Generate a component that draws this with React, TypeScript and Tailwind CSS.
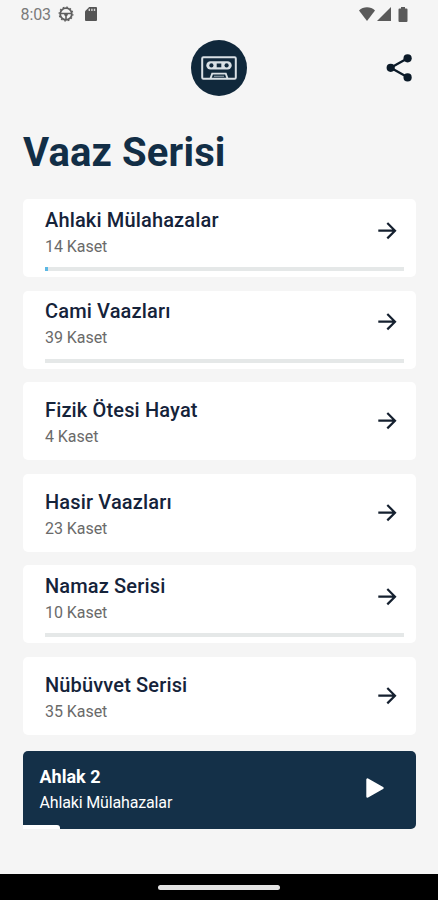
interface Series {
  title: string;
  count: number;
  progress?: number;
}

const series: Series[] = [
  { title: 'Ahlaki Mülahazalar', count: 14, progress: 1 },
  { title: 'Cami Vaazları', count: 39, progress: 0 },
  { title: 'Fizik Ötesi Hayat', count: 4 },
  { title: 'Hasir Vaazları', count: 23 },
  { title: 'Namaz Serisi', count: 10, progress: 0 },
  { title: 'Nübüvvet Serisi', count: 35 },
];

function StatusBar() {
  return (
    <div className="flex h-7 items-center pl-[20.5px] pr-[30px] text-[#7a7a7a]">
      <span className="w-[30px] pt-px text-[16px] leading-7 tracking-[-0.1px]">8:03</span>
      <svg className="ml-[7px] h-4 w-4" viewBox="0 0 16 16" fill="none" stroke="#5f5f5f">
        <circle cx="8" cy="8" r="5.8" strokeWidth="1.8" />
        <circle cx="8" cy="8" r="6.900" strokeWidth="1.1" strokeDasharray="1.8 1.81" />
        <path d="M2.500 7.500h11M8 8v5.500" strokeWidth="1.600" />
        <path d="M5.800 7.500h4.400L9.200 10H6.800z" fill="#5f5f5f" stroke="none" />
      </svg>
      <svg className="ml-[11px] h-[14px] w-3" viewBox="0 0 12 14">
        <path d="M4.200 0H11a1 1 0 0 1 1 1v12a1 1 0 0 1-1 1H1a1 1 0 0 1-1-1V4.200z" fill="#555" />
        <path d="M4.300 1.700v2.400M6.900 1.700v2.400M9.500 1.700v2.400" stroke="#d5d5d5" strokeWidth="1.400" />
      </svg>
      <div className="ml-auto flex items-center text-[#5a5a5a]">
        <svg className="h-[14px] w-4" viewBox="0 0 16 14" fill="currentColor">
          <path d="M8 14 0 3.600C2.200 1.400 5 .3 8 .3s5.800 1.100 8 3.300z" />
        </svg>
        <svg className="ml-[2px] h-[14px] w-[14px]" viewBox="0 0 14 14" fill="currentColor">
          <path d="M14 0v14H0z" />
        </svg>
        <svg className="ml-[7px] h-[15px] w-[10px]" viewBox="0 0 10 15" fill="currentColor">
          <path d="M3 0h4v1.600h1.500a1 1 0 0 1 1 1V14a1 1 0 0 1-1 1h-7a1 1 0 0 1-1-1V2.600a1 1 0 0 1 1-1H3z" />
        </svg>
      </div>
    </div>
  );
}

function CassetteIcon() {
  return (
    <svg className="h-6 w-9" viewBox="0 0 36 24" fill="none" stroke="#d9e0e5">
      <rect x="1.200" y="1.200" width="33.600" height="21.600" rx="1.200" strokeWidth="2" />
      <rect x="5.300" y="5.200" width="25.400" height="8.400" rx="4.200" fill="#d9e0e5" stroke="none" />
      <g fill="#10283b" stroke="none">
        <circle cx="10.400" cy="9.400" r="2.100" />
        <rect x="15.700" y="7.500" width="4.600" height="3.800" />
        <circle cx="25.600" cy="9.400" r="2.100" />
      </g>
      <path d="M9.300 23l1.900-5.400h13.600l1.900 5.400" strokeWidth="1.900" />
      <path d="M13 20.300h10" stroke="#8796a2" strokeWidth="1.200" />
    </svg>
  );
}

function ShareIcon() {
  return (
    <svg className="h-7 w-[26px]" viewBox="0 0 26 28" fill="#0b1a28" stroke="#0b1a28">
      <path d="M21.600 4.300 4.700 13.800l16.900 9.500" fill="none" strokeWidth="2.300" />
      <circle cx="21.600" cy="4.300" r="4.100" stroke="none" />
      <circle cx="4.700" cy="13.800" r="4.100" stroke="none" />
      <circle cx="21.600" cy="23.400" r="4.100" stroke="none" />
    </svg>
  );
}

function ArrowIcon() {
  return (
    <svg className="h-[18px] w-[19px] shrink-0" viewBox="0 0 19 18" fill="none" stroke="#15202f" strokeWidth="2.200">
      <path d="M.3 8.700h16.500M9.300 1 17 8.700l-7.700 7.700" />
    </svg>
  );
}

function SeriesCard({ title, count, progress }: Series) {
  return (
    <li className="flex h-[78px] flex-col rounded-[5px] bg-white pl-[22px] pr-3">
      <div className="flex flex-1 items-center justify-between pr-[7px]">
        <div className="pt-[5px]">
          <h2 className="pl-[0.5px] text-[20px] font-medium leading-[27px] tracking-[0.15px] text-[#15233a]">{title}</h2>
          <p className="pl-[0.5px] text-[16px] leading-[26px] tracking-[-0.05px] text-[#6a6a6a]">{count} Kaset</p>
        </div>
        <ArrowIcon />
      </div>
      {progress !== undefined && (
        <div className="mt-[5px] mb-[6px] h-1 bg-[#e5e8e8]">
          <div className="h-full bg-[#5cb8e4]" style={{ width: `${progress}%` }} />
        </div>
      )}
    </li>
  );
}

function Player() {
  return (
    <div className="flex h-[78px] flex-col overflow-hidden rounded-[5px] rounded-bl-none bg-[#143048]">
      <div className="flex flex-1 items-center justify-between pl-[17px] pr-8">
        <div className="pt-[5px]">
          <div className="text-[18px] font-bold leading-[26px] text-white">Ahlak 2</div>
          <div className="text-[16px] leading-[26px] tracking-[-0.15px] text-white">Ahlaki Mülahazalar</div>
        </div>
        <svg className="h-5 w-[18px]" viewBox="0 0 18 20" fill="#fff" stroke="#fff">
          <path d="M1.500 1.500v17L16.500 10z" strokeWidth="2.400" strokeLinejoin="round" />
        </svg>
      </div>
      <div className="h-1 w-[37px] rounded-tr-[3px] bg-white" />
    </div>
  );
}

export default function App() {
  return (
    <div className="flex h-[900px] w-[438px] flex-col overflow-hidden bg-[#f5f5f5] font-['Roboto',sans-serif]">
      <StatusBar />
      <header className="grid h-20 grid-cols-3 items-center px-[23px]">
        <div />
        <div className="flex h-14 w-14 items-center justify-center justify-self-center rounded-full bg-[#10283b]">
          <CassetteIcon />
        </div>
        <button className="justify-self-end pr-[3px]">
          <ShareIcon />
        </button>
      </header>
      <main className="flex flex-1 flex-col px-[22.500px]">
        <h1 className="mt-[21px] pl-[0.5px] text-[40px] font-bold leading-[48px] tracking-[0.15px] text-[#122e46]">Vaaz Serisi</h1>
        <ul className="mt-[22px] flex flex-col gap-[13.500px]">
          {series.map((item) => (
            <SeriesCard key={item.title} {...item} />
          ))}
        </ul>
        <div className="mt-4">
          <Player />
        </div>
      </main>
      <footer className="flex h-[26px] items-center justify-center bg-black">
        <div className="h-[5px] w-[122px] rounded-full bg-[#e4e4e4]" />
      </footer>
    </div>
  );
}
